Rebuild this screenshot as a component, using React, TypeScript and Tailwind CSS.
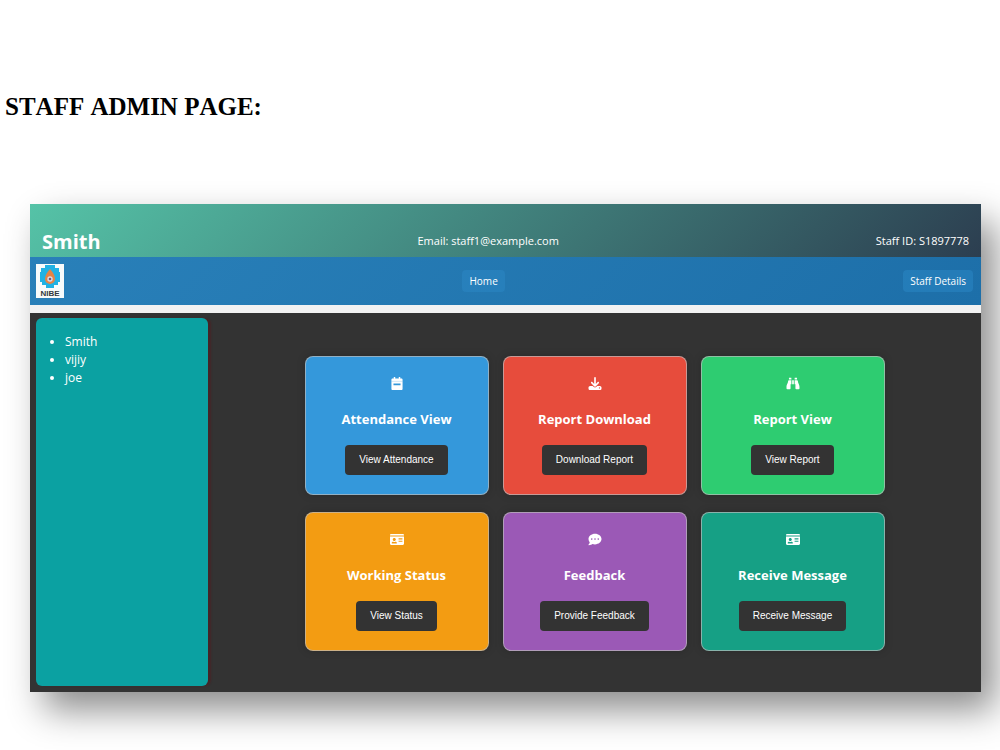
import type { ComponentType } from 'react';
import { FaBinoculars, FaIdCard } from 'react-icons/fa';
import { FaCommentDots, FaDownload } from 'react-icons/fa6';

type Card = {
  title: string;
  action: string;
  color: string;
  Icon: ComponentType<{ className?: string }>;
};

function CalendarIcon({ className }: { className?: string }) {
  return (
    <svg viewBox="0 0 14 14" className={className} fill="currentColor" aria-hidden="true">
      <path
        fillRule="evenodd"
        d="M3.5 0h1.6v1.6h3.8V0h1.6v1.6h1.3c.6 0 1.2.5 1.2 1.2v10c0 .7-.6 1.2-1.2 1.2H2.2C1.6 14 1 13.5 1 12.8v-10c0-.7.6-1.2 1.2-1.2h1.3zM3.2 7v2h7.6V7z"
      />
      <path d="M1 4.7h12" stroke="#3498db" strokeOpacity="0.4" strokeWidth="0.6" />
    </svg>
  );
}

const cards: Card[] = [
  { title: 'Attendance View', action: 'View Attendance', color: 'bg-[#3498db]', Icon: CalendarIcon },
  { title: 'Report Download', action: 'Download Report', color: 'bg-[#e74c3c]', Icon: FaDownload },
  { title: 'Report View', action: 'View Report', color: 'bg-[#2ecc71]', Icon: FaBinoculars },
  { title: 'Working Status', action: 'View Status', color: 'bg-[#f39c12]', Icon: FaIdCard },
  { title: 'Feedback', action: 'Provide Feedback', color: 'bg-[#9b59b6]', Icon: FaCommentDots },
  { title: 'Receive Message', action: 'Receive Message', color: 'bg-[#16a085]', Icon: FaIdCard },
];

const staff = ['Smith', 'vijiy', 'joe'];

function Logo() {
  return (
    <svg viewBox="0 0 28 34" className="h-[34px] w-7" role="img" aria-label="NIBE">
      <rect width="28" height="34" fill="#f8fbfb" />
      <path
        d="M9 1h10v3h4v4h1v10h-2v3h-4v3h-8v-3H6v-3H4V8h1V4h4z"
        fill="#20b2e4"
      />
      <path d="M14 5c3 3 5 7 5 10a5 5 0 0 1-10 0c0-3 2-7 5-10z" fill="#e58345" />
      <circle cx="14" cy="15" r="2.7" fill="#d9dcea" />
      <circle cx="14" cy="15" r="1.3" fill="#705a79" />
      <text
        x="14"
        y="31.5"
        textAnchor="middle"
        fontFamily="Liberation Sans, sans-serif"
        fontWeight="700"
        fontSize="8"
        fill="#33383e"
      >
        NIBE
      </text>
    </svg>
  );
}

function ActionCard({ title, action, color, Icon }: Card) {
  return (
    <section
      className={`flex h-[139px] flex-col items-center rounded-lg border border-[#bbb]/70 pt-5 shadow-[0_0_8px_rgba(0,0,0,0.2)] ${color}`}
    >
      <Icon className="h-[13px] w-[14px]" />
      <h2 className="mt-[19px] text-[13px] leading-5 font-bold">{title}</h2>
      <button
        type="button"
        className="mt-4 h-[30px] rounded bg-[#333] px-[14px] font-['Liberation_Sans',sans-serif] text-[10px] leading-4"
      >
        {action}
      </button>
    </section>
  );
}

export default function App() {
  return (
    <div className="overflow-hidden bg-white pt-[92px] pb-[58px] font-['Open_Sans','Noto_Sans',sans-serif] text-white">
      <h1 className="pl-[5px] font-['Liberation_Serif',serif] text-[25px] leading-[30px] font-bold text-black [font-kerning:none]">
        STAFF ADMIN PAGE:
      </h1>

      <div className="mt-[82px] mr-[19px] ml-[30px] shadow-[14px_18px_34px_rgba(0,0,0,0.45)]">
        <header className="flex h-[53px] items-end justify-between bg-linear-[135deg,#55c3a7,#2c3e50] px-3">
          <span className="text-[20px] leading-[30px] font-bold">Smith</span>
          <span className="pb-[6px] text-[11px] leading-5">Email: staff1@example.com</span>
          <span className="pb-[6px] text-[11px] leading-5">Staff ID: S1897778</span>
        </header>

        <nav className="flex h-12 items-center justify-between bg-linear-[135deg,#2980b9,#1d6fa9] pr-2 pl-[6px] text-[10px] leading-[22px]">
          <Logo />
          <a href="#home" className="rounded bg-[#3498db]/25 px-[7px]">
            Home
          </a>
          <a href="#staff-details" className="rounded bg-[#3498db]/30 px-[7px]">
            Staff Details
          </a>
        </nav>

        <div className="flex border-t-8 border-[#f2f2f2] bg-[#333]">
          <aside className="mt-[5px] mb-[6px] ml-[6px] w-[172px] shrink-0 rounded-md bg-[#0ba1a2] pt-[15px] shadow-[3px_0_2px_rgba(90,20,25,0.45)]">
            <ul className="list-disc pl-[29px] text-[12px] leading-[18px]">
              {staff.map((name) => (
                <li key={name}>{name}</li>
              ))}
            </ul>
          </aside>
          <main className="flex flex-1 justify-center pt-[43px] pb-[41px]">
            <div className="grid grid-cols-[repeat(3,184px)] gap-x-[14px] gap-y-[17px]">
              {cards.map((card) => (
                <ActionCard key={card.title} {...card} />
              ))}
            </div>
          </main>
        </div>
      </div>
    </div>
  );
}
